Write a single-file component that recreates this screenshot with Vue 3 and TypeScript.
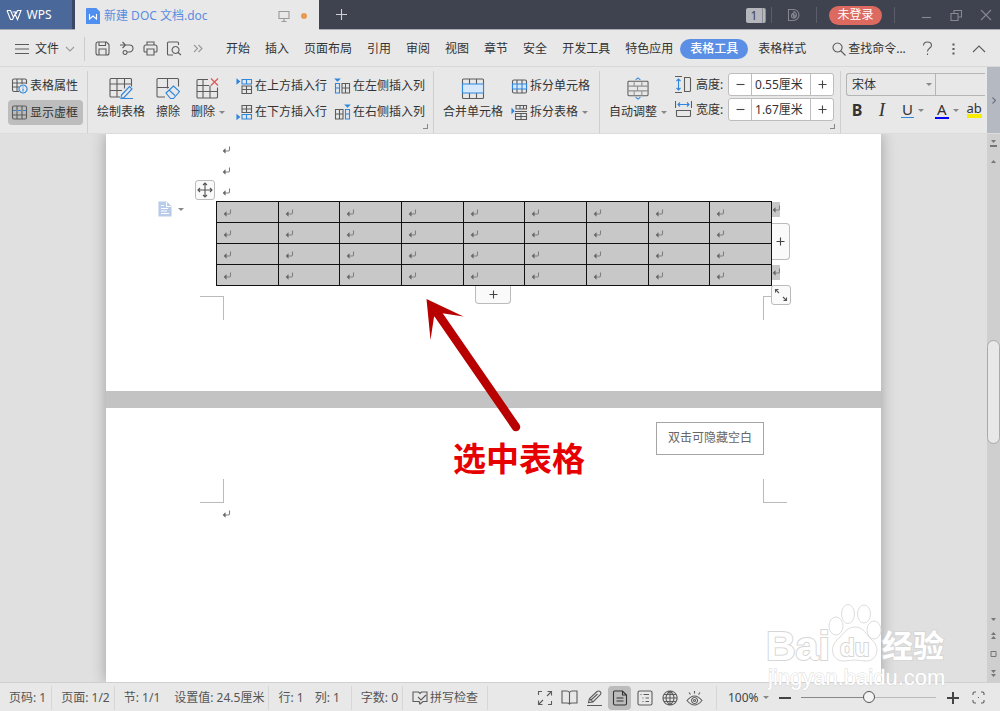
<script setup lang="ts">
import { h, ref } from 'vue'

type Stroke = [d: string, color?: string, fill?: string]
interface Glyph { w: number; h: number; s: Stroke[] }

const INK = '#5c5c5c'
const BLUE = '#2f86dd'
const PALE = '#d6e8fb'

const glyphs: Record<string, Glyph> = {
  wps: { w: 16, h: 12, s: [['M1 1.5h3.5l3 7L10 3H6.5M1 1.5l3.5 9h2L9 5l2.500 5.500L15 1.500h-3.500L10 5', '#fff']] },
  doc: { w: 14, h: 16, s: [['M1 .5h9l3.500 3.500v11.500h-13V1z', '#4f8ff0', '#4f8ff0'], ['M3.500 6v5l3.500-3 3.500 3V6', '#fff']] },
  screen: { w: 12, h: 12, s: [['M1 1.500h10v7H1zM6 8.500v3M3.500 11.500h5', '#999']] },
  plusTab: { w: 13, h: 13, s: [['M6.500 1v11M1 6.500h11', '#d0d1d5']] },
  cloud: { w: 14, h: 14, s: [['M1.500 1.500h5a5.500 5.500 0 0 1 0 11h-5zM7 3.500c3 2 3 3.500 2 5.500-1 1.500-3.500 1.500-4.500 0-.5-1.500 0-2.500 1-3.500l1 1.500zM6 8l1-1.500L8.500 8 7 9.500z', '#85878f']] },
  min: { w: 11, h: 11, s: [['M1 7.500h9', '#888a92']] },
  restore: { w: 12, h: 12, s: [['M1 4.500h7v7H1zM4 4V1.500h7.500V8H8.500', '#888a92']] },
  close: { w: 12, h: 12, s: [['M1 1l10 10M11 1L1 11', '#888a92']] },
  menu: { w: 14, h: 12, s: [['M0 1.500h14M0 6h14M0 10.500h14']] },
  down: { w: 10, h: 6, s: [['M1 1l4 4 4-4', '#999']] },
  up: { w: 14, h: 8, s: [['M1 7l6-6 6 6']] },
  save: { w: 15, h: 15, s: [['M3 1h8.500L14 3.500V12q0 2-2 2H3q-2 0-2-2V3q0-2 2-2zM4 14V8h7v6M4 1v3.500h6.500V1']] },
  undo: { w: 15, h: 15, s: [['M1 4h9.500a3.500 3.500 0 0 1 0 7H8M3.500 1l3 3-3 3M6 9.500a2 2 0 1 0 .1 0']] },
  print: { w: 15, h: 15, s: [['M4 4V1h7v3M4 11H2q-1 0-1-1V6q0-2 2-2h9q2 0 2 2v4q0 1-1 1h-2M4 8h7v6H4z']] },
  preview: { w: 16, h: 15, s: [['M7 14H2.500Q1.500 14 1.500 13V2Q1.500 1 2.500 1h9q1 0 1 1v2'], ['M9.500 5.500a3.500 3.500 0 1 0 .1 0M12 11.500l3 2.500']] },
  more: { w: 10, h: 9, s: [['M1 1l3.500 3.500L1 8M5.500 1L9 4.500 5.500 8', '#999']] },
  search: { w: 14, h: 14, s: [['M5.500 1a4.500 4.500 0 1 0 .1 0M9 9l4.500 4.500']] },
  help: { w: 11, h: 15, s: [['M1.500 4.500q0-3.500 4-3.500t4 3.500c0 2.500-4 2.500-4 6M5.500 12.500v1.500']] },
  dots: { w: 3, h: 12, s: [['M1 1h1v1H1zM1 5.500h1v1H1zM1 10h1v1H1z']] },
  props: { w: 17, h: 16, s: [['M8 13.500H3q-1.500 0-1.500-1.500V2.500Q1.500 1 3 1h11q1.500 0 1.500 1.500V6M1.500 5h14M1.500 9H8M6 1v12.500M11 1v5'], ['M12 7a4 4 0 1 0 .1 0M12 10.500v3M12 8.500v1', BLUE]] },
  frame: { w: 17, h: 15, s: [['M3 1h11q1.500 0 1.500 1.500v10Q15.500 14 14 14H3q-1.500 0-1.500-1.500v-10Q1.500 1 3 1zM1.500 10h14M6 1v13M11 1v13'], ['M2 5.500h3M7 5.500h3M12 5.500h3', BLUE]] },
  draw: { w: 24, h: 22, s: [['M11 19.500H2q-1 0-1-1V2q0-1 1-1h19.500q1 0 1 1v7M1 6.500h21.500M1 13h12M8 1v18.500M15.500 1v10'], ['M12.500 17.500l8-8.500 2.500 2.500-8 8.500-3 1zM13 21h11', BLUE]] },
  erase: { w: 24, h: 22, s: [['M9 19.500H2q-1 0-1-1V2q0-1 1-1h19.500q1 0 1 1v7M1 10h12M11.500 1v10'], ['M10 15.500l7.500-7 6 5.500-6 7h-3zM13 12.500l6 5.500', BLUE]] },
  remove: { w: 24, h: 22, s: [['M12 2H2q-1 0-1 1v16.500q0 1 1 1h18q1.500 0 1.500-1V10M1 8h12M1 14h20.500M7 2v18.500M14 8v12.500'], ['M15 1l7 7M22 1l-7 7', '#dd5454']] },
  rowUp: { w: 17, h: 17, s: [['M6 8v7.500h9.500V8zM6 11.500h9.500M10.500 8v7.500'], ['M6 1.500h9.500V6H6zM10.500 1.500V6', BLUE], ['M1 1.500l2.500 2-2.500 2z', BLUE, BLUE]] },
  rowDown: { w: 17, h: 17, s: [['M6 8.500V1.500h9.500v7zM6 5h9.500M10.500 1.500v7'], ['M6 10.500h9.500V15H6zM10.500 10.500V15', BLUE], ['M1 11l2.500 2-2.500 2z', BLUE, BLUE]] },
  colLeft: { w: 17, h: 17, s: [['M8 5.500h7.500v9.500H8zM8 10h7.500M11.500 5.500V15'], ['M1.500 5.500h4V15h-4zM1.500 10h4', BLUE], ['M1.500 1h4L3.500 3z', BLUE, BLUE]] },
  colRight: { w: 17, h: 17, s: [['M9 5.500H1.500v9.500H9zM1.500 10H9M5.500 5.500V15'], ['M11.500 5.500h4V15h-4zM11.500 10h4', BLUE], ['M11.500 1h4L13.500 3z', BLUE, BLUE]] },
  merge: { w: 24, h: 21, s: [['M2.500 1h19q1 0 1 1v17.500q0 1-1 1h-19q-1 0-1-1V2q0-1 1-1zM8.500 1v5M15.500 1v5M8.500 15v5.500M15.500 15v5.500'], ['M1.500 6h21v9h-21z', BLUE, PALE]] },
  splitCell: { w: 17, h: 15, s: [['M3 1h11q1.500 0 1.500 1.500v10Q15.500 14 14 14H3q-1.500 0-1.500-1.500v-10Q1.500 1 3 1zM6 1v4M11 1v4M6 10v4M11 10v4'], ['M1.500 5h14v5h-14zM6 5v5M11 5v5', BLUE, PALE]] },
  splitTable: { w: 17, h: 17, s: [['M5 5V1.500h10.500V5zM9 1.500V5M12.500 1.500V5M4 7.500h12M4.500 9.500h11v6h-11zM4.500 12.500h11M10 9.500v6'], ['M1 5l2 2-2 2z', BLUE, BLUE]] },
  fit: { w: 24, h: 24, s: [['M2.500 4.500h19q1 0 1 1v13q0 1-1 1h-19q-1 0-1-1v-13q0-1 1-1z'], ['M1.500 9.500h21M1.500 14.500h21M8 4.500v5M16 4.500v5M11.500 9.500v5M8 14.500v5M16 14.500v5', '#909090'], ['M9.500 3L12 1l2.500 2M9.500 21l2.500 2 2.500-2', BLUE]] },
  height: { w: 17, h: 17, s: [['M0 .5h7M0 16.500h7M9.500 1.500h5q1 0 1 1v12q0 1-1 1h-5z'], ['M3.500 3v11M1.500 5l2-2 2 2M1.500 12l2 2 2-2', BLUE]] },
  width: { w: 17, h: 17, s: [['M.5 0v7M16.500 0v7M1.500 9.500h14v5q0 1-1 1h-12q-1 0-1-1z'], ['M3 3.500h11M5 1.500l-2 2 2 2M12 1.500l2 2-2 2', BLUE]] },
  minus: { w: 9, h: 9, s: [['M.5 4.500h8', '#444']] },
  plus: { w: 9, h: 9, s: [['M.5 4.500h8M4.500.5v8', '#444']] },
  corner: { w: 5, h: 5, s: [['M4.500 0v4.500H0', '#888']] },
  right: { w: 4, h: 7, s: [['M.5.5l3 3-3 3', '#6b7080']] },
  mark: { w: 9, h: 8, s: [['M7.500.5v3q0 1.500-1 1.500H2', '#808080'], ['M3 3.500L1.500 5 3 6.500z', '#666', '#666']] },
  move: { w: 16, h: 16, s: [['M8 1v14M1 8h14M6 3l2-2 2 2M6 13l2 2 2-2M3 6L1 8l2 2M13 6l2 2-2 2', '#555']] },
  resize: { w: 14, h: 14, s: [['M5 5L1.500 1.500M1.500 4.500v-3h3M9 9l3.500 3.500M12.500 9.500v3h-3', '#555']] },
  note: { w: 14, h: 16, s: [['M1 1h7.500L13 5.500V15H1z', '#b9cbea', '#b9cbea'], ['M8.500 1v4.500H13M3 4.500h3M3 7.500h7M3 12.500h8M3 10h6', '#fff']] },
  spell: { w: 16, h: 14, s: [['M8 11.500L7 10.500H1V1h5.500L8 2.500 9.500 1H15v9.500H11L8 13l-1-2.500M6 6l3 3 5-5']] },
  expand: { w: 16, h: 16, s: [['M1.500 5V1.500H5M10.500 1.500h4v4M14.500 11v3.500H11M5.500 14.500h-4v-4M10 6l4-4M6 10l-4 4']] },
  book: { w: 17, h: 15, s: [['M8.500 14V2.500Q7.500 1 6 1H1v12h5q2 0 2.500 1Q9 13 11 13h5V1h-5Q9.500 1 8.500 2.500']] },
  pen: { w: 17, h: 16, s: [['M2.500 12.500l1-4L11 1.500q1.500-1 3 0t.5 3L7 12zM3.500 8.500L7 12M5 10l6.500-6M1 15.500h15']] },
  page: { w: 16, h: 16, s: [['M2.500 1h8l4 4v8.500q0 1.500-1.500 1.500h-10Q1.500 15 1.500 13.500V2.500Q1.500 1 2.500 1zM10.500 1v4h4M4.500 8h7M4.500 11h7', '#333']] },
  outline: { w: 16, h: 16, s: [['M2.500 1h11Q15 1 15 2.500v11q0 1.500-1.500 1.500h-11Q1 15 1 13.500v-11Q1 1 2.500 1zM3.500 4.500h1M6.500 4.500H12M5.500 8h1M8.500 8H12M5.500 11.500h1M8.500 11.500H12']] },
  globe: { w: 16, h: 16, s: [['M8 1a7 7 0 1 0 .1 0M8 1v14M1 8h14M2 4.500h12M2 11.500h12M8 1q-8 7 0 14M8 1q8 7 0 14']] },
  eye: { w: 17, h: 16, s: [['M1 10.500q7.500-9 15 0-7.500 9-15 0zM8.500 7.500a3 3 0 1 0 .1 0M8.500 9.500a1 1 0 1 0 .1 0M8.500 1v2.500M3 2.500l1.500 2M14 2.500l-1.500 2']] },
  focus: { w: 13, h: 13, s: [['M1 4V2.500Q1 1 2.500 1H4M9 1h1.500Q12 1 12 2.500V4M12 9v1.500q0 1.500-1.500 1.500H9M4 12H2.500Q1 12 1 10.500V9M6 6.500h1']] },
}

const Icon = (p: { name: string }) => {
  const g = glyphs[p.name]
  return h('svg', { width: g.w, height: g.h, viewBox: `0 0 ${g.w} ${g.h}`, 'aria-hidden': 'true' },
    g.s.map(([d, color, fill]) => h('path', { d, stroke: color ?? INK, fill: fill ?? 'none', 'stroke-width': 1.1 })))
}
Icon.props = ['name']

const quick = [
  { name: 'save', label: '保存' }, { name: 'undo', label: '撤消' },
  { name: 'print', label: '打印' }, { name: 'preview', label: '打印预览' }, { name: 'more', label: '更多' },
]
const tabs = ['开始', '插入', '页面布局', '引用', '审阅', '视图', '章节', '安全', '开发工具', '特色应用', '表格工具', '表格样式']
const activeTab = ref('表格工具')
const inserts = [
  { icon: 'rowUp', text: '在上方插入行' }, { icon: 'colLeft', text: '在左侧插入列' },
  { icon: 'rowDown', text: '在下方插入行' }, { icon: 'colRight', text: '在右侧插入列' },
]
const sizes = ref([
  { id: 'cell-height', icon: 'height', text: '高度:', value: '0.55厘米' },
  { id: 'cell-width', icon: 'width', text: '宽度:', value: '1.67厘米' },
])
const views = [
  { name: 'expand', label: '全屏显示' }, { name: 'book', label: '阅读版式' }, { name: 'pen', label: '写作模式' },
  { name: 'page', label: '页面视图' }, { name: 'outline', label: '大纲' }, { name: 'globe', label: 'Web 版式' }, { name: 'eye', label: '护眼模式' },
]
const activeView = ref('page')
const zoom = ref(50)
const font = ref('宋体')
</script>

<template>
  <div class="app">
    <header class="title">
      <button class="home"><Icon name="wps" />WPS</button>
      <div class="doctab">
        <Icon name="doc" /><span class="docname">新建 DOC 文档.doc</span><Icon name="screen" /><i class="dirty"></i>
      </div>
      <button class="newtab" aria-label="新建标签"><Icon name="plusTab" /></button>
      <div class="window">
        <span class="count">1</span><i class="tsep"></i>
        <button aria-label="云文档"><Icon name="cloud" /></button><i class="tsep"></i>
        <button class="login">未登录</button><i class="tsep"></i>
        <button class="minimize" aria-label="最小化"><Icon name="min" /></button>
        <button aria-label="还原"><Icon name="restore" /></button>
        <button aria-label="关闭"><Icon name="close" /></button>
      </div>
    </header>

    <nav class="menu">
      <button class="file"><Icon name="menu" />文件<Icon name="down" /></button>
      <i class="msep"></i>
      <div class="quick">
        <button v-for="q in quick" :key="q.name" :aria-label="q.label"><Icon :name="q.name" /></button>
      </div>
      <div class="tabs">
        <button v-for="t in tabs" :key="t" :class="{ active: t === activeTab }" @click="activeTab = t">{{ t }}</button>
      </div>
      <button class="find"><Icon name="search" />查找命令...</button>
      <div class="helpers">
        <button aria-label="帮助"><Icon name="help" /></button>
        <button aria-label="选项"><Icon name="dots" /></button>
        <button aria-label="收起功能区"><Icon name="up" /></button>
      </div>
    </nav>

    <section class="ribbon">
      <div class="group first">
        <button class="small"><Icon name="props" />表格属性</button>
        <button class="small on"><Icon name="frame" />显示虚框</button>
      </div>
      <div class="group tools">
        <button class="big"><Icon name="draw" /><span>绘制表格</span></button>
        <button class="big"><Icon name="erase" /><span>擦除</span></button>
        <button class="big"><Icon name="remove" /><span class="caret">删除</span></button>
        <div class="inserts">
          <button v-for="i in inserts" :key="i.text" class="small"><Icon :name="i.icon" />{{ i.text }}</button>
        </div>
        <span class="launch"><Icon name="corner" /></span>
      </div>
      <div class="group cells">
        <button class="big"><Icon name="merge" /><span>合并单元格</span></button>
        <div class="stack">
          <button class="small"><Icon name="splitCell" />拆分单元格</button>
          <button class="small"><Icon name="splitTable" /><span class="caret">拆分表格</span></button>
        </div>
      </div>
      <div class="group sizes">
        <button class="big"><Icon name="fit" /><span class="caret">自动调整</span></button>
        <div class="fields">
          <div v-for="s in sizes" :key="s.id" class="field">
            <Icon :name="s.icon" /><label :for="s.id">{{ s.text }}</label>
            <div class="stepper">
              <button :aria-label="s.text + '减小'"><Icon name="minus" /></button>
              <input :id="s.id" v-model="s.value" type="text" />
              <button :aria-label="s.text + '增大'"><Icon name="plus" /></button>
            </div>
          </div>
        </div>
        <span class="launch"><Icon name="corner" /></span>
      </div>
      <div class="group fonts">
        <div class="fontrow">
          <span class="pick"><select v-model="font" aria-label="字体"><option>宋体</option></select></span>
          <input type="text" aria-label="字号" />
        </div>
        <div class="styles">
          <button class="b" aria-label="加粗">B</button>
          <button class="i" aria-label="倾斜">I</button>
          <button class="u caret" aria-label="下划线"><span>U</span></button>
          <button class="a caret" aria-label="字体颜色"><span>A</span></button>
          <button class="hl" aria-label="突出显示"><span>ab</span></button>
        </div>
      </div>
      <button class="scrollright" aria-label="向右滚动"><Icon name="right" /></button>
    </section>

    <main class="work">
      <div class="canvas">
        <div class="pages">
          <article class="page one">
            <p v-for="n in 3" :key="n" class="para"><Icon name="mark" /></p>
            <div class="tablebox">
              <table>
                <tbody>
                  <tr v-for="r in 4" :key="r"><td v-for="c in 9" :key="c"><Icon name="mark" /></td></tr>
                </tbody>
              </table>
              <span class="rowend top"><Icon name="mark" /></span>
              <span class="rowend bottom"><Icon name="mark" /></span>
              <button class="handle move" aria-label="移动表格"><Icon name="move" /></button>
              <button class="note caret" aria-label="段落布局"><Icon name="note" /></button>
              <button class="handle addcol" aria-label="添加列"><Icon name="plus" /></button>
              <button class="handle addrow" aria-label="添加行"><Icon name="plus" /></button>
              <button class="handle resize" aria-label="调整大小"><Icon name="resize" /></button>
            </div>
            <div class="crops foot"><i></i><i></i></div>
          </article>
          <article class="page two">
            <span class="tip">双击可隐藏空白</span>
            <div class="crops head"><i></i><i></i></div>
            <p class="para"><Icon name="mark" /></p>
          </article>
          <svg class="pointer" width="100" height="140" viewBox="0 0 100 140" aria-hidden="true">
            <path d="M2.500 2L39.500 19.500 16.500 16 10 20 6.500 43z" fill="#b90000" />
            <path d="M14 17L92 130" stroke="#b90000" stroke-width="8.500" stroke-linecap="round" />
          </svg>
          <strong class="caption">选中表格</strong>
        </div>
      </div>
      <div class="scroll" aria-hidden="true">
        <svg class="ends" width="9" height="26" viewBox="0 0 9 26"><path d="M2 2h5L4.500 5zM1 7h7v2H1zM4.500 22l2.500 3H2z" fill="#777" /></svg>
        <i class="thumb"></i>
        <svg class="ends" width="9" height="62" viewBox="0 0 9 62"><path d="M2 2h5L4.500 5zM4.500 16L7 19H2zM4.500 20L7 23H2zM2 54h5L4.500 57zM2 58h5L4.500 61z" fill="#777" /><path d="M2 35.500h5v5H2z" fill="none" stroke="#777" /></svg>
      </div>
    </main>

    <footer class="status">
      <span class="cell">页码: 1</span>
      <span class="cell">页面: 1/2</span>
      <span class="cell wide"><span>节: 1/1</span><span>设置值: 24.5厘米</span></span>
      <span class="cell lines"><span>行: 1</span><span>列: 1</span></span>
      <span class="cell">字数: 0</span>
      <button class="cell spell"><Icon name="spell" />拼写检查</button>
      <div class="views">
        <button v-for="v in views" :key="v.name" :aria-label="v.label" :class="{ on: v.name === activeView }" @click="activeView = v.name"><Icon :name="v.name" /></button>
      </div>
      <button class="percent caret">100%</button>
      <button class="zoombtn" aria-label="缩小"><svg width="12" height="12" viewBox="0 0 12 12"><path d="M0 6h12" stroke="#444" stroke-width="2" /></svg></button>
      <input v-model="zoom" class="slider" type="range" min="0" max="100" aria-label="缩放" />
      <button class="zoombtn" aria-label="放大"><svg width="12" height="12" viewBox="0 0 12 12"><path d="M0 6h12M6 0v12" stroke="#444" stroke-width="2" /></svg></button>
      <button class="zoombtn focus" aria-label="最佳比例"><Icon name="focus" /></button>
    </footer>

    <svg class="brand" width="190" height="96" viewBox="0 0 190 96">
      <g class="paw">
        <ellipse cx="72" cy="26" rx="7" ry="9" />
        <ellipse cx="84" cy="14" rx="6.500" ry="9.500" />
        <ellipse cx="100" cy="14" rx="6.500" ry="9" />
        <ellipse cx="110" cy="30" rx="7" ry="9" />
        <path d="M91 27c9 0 11 8 17 13 9 8 5 21-6 21-4 0-7-1-11-1s-7 1-11 1c-12 0-15-13-7-21 6-5 9-13 18-13z" />
      </g>
      <text class="bai" x="2" y="60">Bai</text>
      <text class="du" x="76" y="56">du</text>
      <text class="exp" x="118" y="57">经验</text>
      <text class="url" x="4" y="85">jingyan.baidu.com</text>
    </svg>
  </div>
</template>

<style>
html, body { margin: 0; height: 100%; overflow: hidden; }
</style>

<style scoped>
.app { position: relative; display: flex; flex-direction: column; height: 100vh; overflow: hidden; background: #e8e8e8; color: #333; font: 12px/16px "Noto Sans", "Noto Sans CJK SC", sans-serif; white-space: nowrap; }
button, input, select { font: inherit; color: inherit; border: 0; background: none; padding: 0; margin: 0; min-width: 0; outline: 0; box-sizing: border-box; border-radius: 0; }
button { display: flex; align-items: center; justify-content: center; flex: none; }
svg { flex: none; display: block; }
p { margin: 0; }
.caret::after { content: ""; border: 3px solid transparent; border-top-color: #888; border-bottom: 0; margin-left: 4px; flex: none; }
span.caret { display: flex; align-items: center; }

.title { display: flex; flex: none; height: 30px; background: #3f424f; border-bottom: 1px solid #a9abb2; box-sizing: border-box; }
.home { width: 75px; gap: 4px; padding-right: 14px; padding-top: 1px; background: #4a6899; color: #fff; border-right: 3px solid #3b4763; }
.doctab { display: flex; align-items: center; width: 244px; padding: 1px 12px 0 11px; box-sizing: border-box; gap: 4px; background: #e8e8e8; color: #5b8de0; height: 30px; }
.docname { flex: 1; }
.dirty { width: 6px; height: 6px; border-radius: 50%; background: #e89b50; margin-left: 7px; }
.newtab { width: 45px; }
.window { margin-left: auto; display: flex; align-items: center; padding-top: 1px; }
.window button { width: 30px; }
.count { width: 16px; height: 15px; line-height: 15px; text-align: center; background: #b5b7bc; color: #3f424f; border-right: 4px double #8b8d95; border-radius: 2px; margin-right: 5px; }
.tsep { width: 1px; height: 16px; background: #5b5e69; }
.window .tsep + button { margin: 0 7px; }
.window .tsep + .login { width: 53px; height: 19px; margin: 0 12px; border-radius: 10px; background: #dc6a60; color: #fff; }
.window .tsep + .minimize { margin: 0 0 0 16px; }
.window button:last-child { margin-right: -1px; }

.menu { display: flex; flex: none; align-items: center; height: 37px; box-sizing: border-box; border-bottom: 1px solid #d8d8d8; padding-top: 1px; }
.file { margin-left: 15px; gap: 6px; width: 60px; }
.msep { width: 1px; height: 24px; background: #ccc; margin-left: 9px; }
.quick { display: flex; margin-left: 5px; }
.quick button { width: 24px; height: 24px; }
.tabs { display: flex; margin-left: 8px; }
.tabs button { height: 20px; padding: 0 7px 0 8px; }
.tabs .active { padding: 0 10px; margin: 0 2px 0 0; border-radius: 10px; background: #5b8fe5; color: #fff; font-weight: 500; }
.find { gap: 2px; margin-left: 19px; }
.helpers { display: flex; margin-left: auto; padding-right: 8px; }
.helpers button { width: 26px; height: 24px; }

.ribbon { display: flex; flex: none; height: 67px; box-sizing: border-box; border-bottom: 1px solid #dcdcdc; position: relative; z-index: 2; }
.group { position: relative; display: flex; flex: none; padding-top: 6px; box-sizing: border-box; }
.group + .group { border-left: 1px solid #cfcfcf; margin-top: 4px; padding-top: 2px; }
.small { height: 24px; gap: 2px; justify-content: flex-start; border-radius: 4px; }
.first { flex-direction: column; gap: 2px; padding-left: 8px; padding-right: 4px; }
.first .small { width: 75px; height: 25px; padding-left: 3px; }
.first .on { background: #bdbdbd; }
.big { flex-direction: column; gap: 4px; justify-content: flex-start; padding-top: 4px; }
.big svg { height: 23px; }
.tools { padding-left: 9px; width: 346px; }
.tools .big + .big { margin-left: 11px; }
.inserts { display: grid; grid-template-columns: 98px 92px; grid-auto-rows: 24px; gap: 2px 0; margin-left: 11px; margin-top: 1px; }
.launch { position: absolute; right: 5px; bottom: 4px; }
.cells { padding-left: 9px; width: 166px; }
.cells .stack { display: flex; flex-direction: column; gap: 2px; margin-left: 8px; margin-top: 1px; }
.sizes { width: 241px; padding-left: 9px; }
.fields { margin-left: 8px; display: flex; flex-direction: column; gap: 2px; }
.field { display: flex; align-items: center; height: 23px; }
.field label { width: 32px; margin-left: 4px; }
.stepper { display: flex; width: 106px; height: 23px; box-sizing: border-box; border: 1px solid #bdbdbd; border-radius: 3px; background: #fff; }
.stepper button { width: 22px; }
.stepper input { flex: 1; padding-left: 3px; border: solid #bdbdbd; border-width: 0 1px; }
.fonts { flex: 1; min-width: 0; flex-direction: column; padding-left: 5px; overflow: hidden; }
.fontrow { display: flex; flex: none; height: 23px; box-sizing: border-box; border: 1px solid #b5b5b5; border-right: 0; border-radius: 3px 0 0 3px; }
.pick { position: relative; display: flex; width: 88px; flex: none; border-right: 1px solid #b5b5b5; }
.pick select { appearance: none; flex: 1; padding-left: 5px; }
.pick::after { content: ""; position: absolute; right: 3px; top: 9px; border: 3px solid transparent; border-top-color: #888; border-bottom: 0; }
.fontrow input { flex: 1; }
.styles { display: flex; align-items: center; height: 26px; margin-top: 1px; margin-left: 5px; font-size: 15px; line-height: 16px; }
.styles .b { font-weight: 700; width: 12px; font-size: 16px; }
.styles .i { font-family: "Liberation Serif", serif; font-style: italic; font-size: 19px; width: 14px; margin-left: 12px; }
.styles .u { margin-left: 12px; }
.styles .u span { border-bottom: 1px solid #2f86dd; line-height: 15px; padding: 0 1px; }
.styles .a { margin-left: 11px; }
.styles .a span { border-bottom: 2px solid #00f; padding: 0 2px; line-height: 15px; }
.styles .hl { margin-left: 8px; }
.styles .hl span { border-bottom: 4px solid #f5ee00; font-size: 13px; line-height: 12px; }
.scrollright { width: 13px; background: #b5b9c2; margin-left: 2px; }

.work { display: flex; flex: 1; min-height: 0; }
.canvas { flex: 1; min-width: 0; background: #e0e0e0; overflow: hidden; }
.pages { position: relative; display: flex; flex-direction: column; width: calc(100% - 212px); height: 100%; margin: 0 auto; background: #c3c3c3; box-shadow: 0 0 14px rgba(0, 0, 0, .3); }
.page { position: relative; background: #fff; }
.one { padding: 4px 109px 105px 110px; margin-bottom: 17px; }
.two { flex: 1; padding: 94px 109px 0 110px; }
.para { height: 21px; display: flex; align-items: center; padding: 2px 0 0 6px; box-sizing: border-box; }
.tablebox { position: relative; }
table { width: 100%; border-collapse: collapse; table-layout: fixed; background: #c8c8c8; }
td { height: 21px; padding: 2px 0 0 6px; border: 1px solid #111; box-sizing: border-box; }
.rowend { position: absolute; left: 100%; width: 8px; height: 15px; padding-top: 3px; box-sizing: border-box; background: #c8c8c8; overflow: hidden; }
.rowend.top { top: 1px; }
.rowend.bottom { bottom: 6px; }
.handle { position: absolute; border: 1px solid #bbb; border-radius: 3px; background: #fafafa; }
.move { left: -21px; top: -21px; width: 20px; height: 20px; }
.addcol { left: 100%; top: 22px; width: 18px; height: 37px; border-left: 0; border-radius: 0 4px 4px 0; }
.addrow { left: calc(50% - 19px); top: 100%; width: 36px; height: 18px; border-top: 0; border-radius: 0 0 4px 4px; }
.resize { left: 100%; top: 100%; width: 20px; height: 20px; margin: -1px; z-index: 1; }
.note { position: absolute; left: -58px; top: 0; }
.note::after { margin-left: 6px; }
.crops { position: absolute; left: 94px; right: 94px; height: 24px; display: flex; justify-content: space-between; }
.crops i { width: 24px; box-sizing: border-box; border: 0 solid #bbb; }
.crops i:first-child { border-right-width: 1px; }
.crops i:last-child { border-left-width: 1px; }
.foot { bottom: 71px; }
.foot i { border-top-width: 1px; }
.head { top: 71px; }
.head i { border-bottom-width: 1px; }
.tip { position: absolute; top: 14px; right: 117px; width: 108px; height: 33px; line-height: 29px; box-sizing: border-box; text-align: center; border: 1px solid #a5a5a5; color: #666; }
.pointer { position: absolute; left: 318px; top: 163px; }
.caption { position: absolute; left: 347px; top: 305px; font-size: 33px; line-height: 40px; color: #e60000; }

.scroll { width: 13px; background: #cfcfcf; display: flex; flex-direction: column; align-items: center; padding: 4px 0; box-sizing: border-box; }
.scroll .ends:first-child { margin-bottom: auto; }
.thumb { width: 11px; height: 102px; border: 1px solid #aaa; border-radius: 7px; background: #e8e8e8; margin-top: 3px; }
.scroll .ends:last-child { margin-top: auto; }

.status { display: flex; flex: none; align-items: center; height: 29px; box-sizing: border-box; border-top: 1px solid #cfcfcf; padding-top: 1px; color: #555; }
.cell { display: flex; align-items: center; justify-content: flex-start; height: 24px; padding: 0 5px 0 9px; border-right: 1px solid #d6d6d6; }
.cell + .cell { padding: 0 4px 0 9px; }
.status .cell.wide { gap: 14px; }
.status .cell.lines { gap: 11px; padding-right: 11px; }
.status .cell.spell { gap: 2px; padding-right: 9px; }
.views { display: flex; margin-left: auto; padding-right: 9px; border-right: 1px solid #d6d6d6; }
.views button { width: 23px; height: 24px; margin: 0 1px; border-radius: 4px; }
.views .on { background: #bcbcbc; }
.percent { margin-left: 11px; width: 43px; justify-content: flex-start; color: #444; }
.zoombtn { width: 20px; height: 20px; margin: 0 6px 0 4px; }
.slider + .zoombtn { margin: 0 5px 0 7px; }
.zoombtn.focus { margin: 0 12px 0 0; }
.slider { appearance: none; width: 135px; height: 16px; }
.slider::-webkit-slider-runnable-track { height: 1px; background: linear-gradient(90deg, #888 50%, #bbb 50%); }
.slider::-webkit-slider-thumb { appearance: none; width: 12px; height: 12px; margin-top: -6px; border: 1px solid #555; border-radius: 50%; background: #f4f4f4; box-sizing: border-box; }

.brand { position: absolute; right: 46px; bottom: 15px; z-index: 3; pointer-events: none; overflow: visible; }
.brand .paw { fill: #fff; fill-opacity: .8; stroke: #ddd; }
.brand text { font-family: "Liberation Sans", "Noto Sans CJK SC", sans-serif; font-weight: 700; fill: #fff; stroke: #d6d6d6; stroke-width: 2px; paint-order: stroke; }
.brand .bai { font-size: 41px; }
.brand .du { font-size: 24px; }
.brand .exp { font-size: 31px; }
.brand .url { font-size: 22px; font-weight: 400; stroke: #d9d9d9; stroke-width: 1px; }
</style>
